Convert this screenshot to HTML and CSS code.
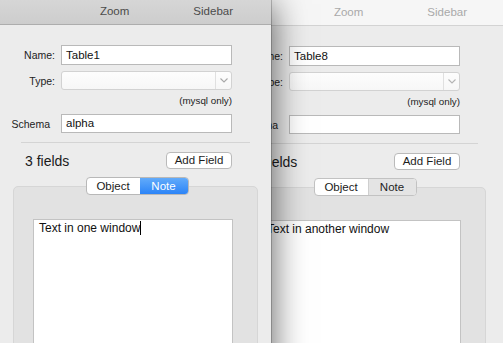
FILE: index.html
```html
<!DOCTYPE html>
<html>
<head>
<meta charset="utf-8">
<link rel="stylesheet" href="styles.css">
</head>
<body>
<div class="desktop">
  <div class="win back">
    <div class="toolbar"><span class="tb-item">Zoom</span><span class="tb-item">Sidebar</span></div>
    <div class="content">
      <div class="form">
        <label class="lbl">Name:</label>
        <div class="field">Table8</div>
        <label class="lbl row2">Type:</label>
        <div class="select row2"><span class="sel-val"></span><span class="sel-btn"><svg width="8" height="5" viewBox="0 0 8 5"><path d="M0.5 0.5 L4 4 L7.5 0.5" fill="none" stroke="#b4b4b4" stroke-width="1.1"/></svg></span></div>
        <div class="hint">(mysql only)</div>
        <label class="lbl schema">Schema</label>
        <div class="field schema"></div>
      </div>
      <div class="sep"></div>
      <div class="fields-row"><span class="count">3 fields</span><button class="btn">Add Field</button></div>
      <div class="tabs"><div class="seg"><span class="seg-item">Object</span><span class="seg-item on">Note</span></div></div>
      <div class="panel">
        <div class="textarea">Text in another window</div>
      </div>
    </div>
  </div>
  <div class="win front">
    <div class="toolbar"><span class="tb-item">Zoom</span><span class="tb-item">Sidebar</span></div>
    <div class="content">
      <div class="form">
        <label class="lbl">Name:</label>
        <div class="field">Table1</div>
        <label class="lbl row2">Type:</label>
        <div class="select row2"><span class="sel-val"></span><span class="sel-btn"><svg width="8" height="5" viewBox="0 0 8 5"><path d="M0.5 0.5 L4 4 L7.5 0.5" fill="none" stroke="#a8a8a8" stroke-width="1.1"/></svg></span></div>
        <div class="hint">(mysql only)</div>
        <label class="lbl schema">Schema</label>
        <div class="field schema">alpha</div>
      </div>
      <div class="sep"></div>
      <div class="fields-row"><span class="count">3 fields</span><button class="btn">Add Field</button></div>
      <div class="tabs"><div class="seg"><span class="seg-item">Object</span><span class="seg-item on">Note</span></div></div>
      <div class="panel">
        <div class="textarea">Text in one window<span class="caret"></span></div>
      </div>
    </div>
  </div>
</div>
</body>
</html>
```
FILE: styles.css
```css
html, body {
  margin: 0;
  padding: 0;
  background: #ececec;
  font-family: "Liberation Sans", Arial, sans-serif;
  color: #1e1e1e;
}
.desktop {
  position: relative;
  width: 503px;
  height: 343px;
  overflow: hidden;
}
.win {
  position: absolute;
  top: 0;
  height: 420px;
  background: #ececec;
}
.win.front {
  left: 0;
  width: 271px;
  z-index: 2;
  box-shadow: 1px 0 0 rgba(0,0,0,0.2), 2px 4px 32px rgba(0,0,0,0.6);
}
.win.back {
  left: 228px;
  width: 277px;
  z-index: 1;
}
.toolbar {
  box-sizing: border-box;
  height: 25px;
  border-bottom: 1px solid #adadad;
  background: linear-gradient(#d6d6d6, #cdcdcd);
  display: flex;
  justify-content: flex-end;
  align-items: flex-end;
  gap: 64px;
  padding-right: 38px;
  font-size: 11.5px;
  color: #4b4b4b;
}
.back .toolbar {
  background: #f6f6f6;
  border-bottom-color: #d3d3d3;
  color: #a9a9a9;
  height: 26px;
}
.tb-item {
  line-height: 13px;
  padding-bottom: 6px;
}
.content {
  width: 271px;
}
.form {
  display: grid;
  grid-template-columns: 55px 171px;
  column-gap: 6px;
  padding-top: 20px;
  font-size: 10.5px;
}
.lbl {
  text-align: right;
  align-self: center;
  color: #222;
}
.field {
  height: 20px;
  box-sizing: border-box;
  border: 1px solid #b9b9b9;
  background: #fff;
  padding-left: 4px;
  font-size: 11.5px;
  line-height: 18px;
  color: #111;
}
.row2 {
  margin-top: 6px;
}
.select {
  height: 19px;
  box-sizing: border-box;
  border: 1px solid #d2d2d2;
  border-radius: 3px;
  background: linear-gradient(#fdfdfd, #f7f7f7);
  display: flex;
}
.sel-val {
  flex: 1;
}
.sel-btn {
  width: 15px;
  border-left: 1px solid #e0e0e0;
  display: flex;
  align-items: center;
  justify-content: center;
}
.hint {
  grid-column: 2;
  text-align: right;
  font-size: 9.8px;
  line-height: 12px;
  margin-top: 5px;
  color: #222;
}
.schema {
  margin-top: 7px;
}
.lbl.schema {
  padding-right: 5px;
}
.field.schema {
  height: 19px;
  line-height: 17px;
}
.sep {
  margin: 9px 21px 0 21px;
  height: 1px;
  background: #d4d4d4;
}
.fields-row {
  display: flex;
  justify-content: space-between;
  align-items: center;
  margin-top: 9px;
  padding-left: 25px;
  width: 232px;
  box-sizing: border-box;
}
.count {
  font-size: 14px;
  color: #1a1a1a;
}
.btn {
  width: 66px;
  height: 17px;
  padding: 0;
  border: 1px solid #bababa;
  border-radius: 4px;
  background: #fff;
  font-family: inherit;
  font-size: 11.5px;
  line-height: 15px;
  color: #1e1e1e;
}
.tabs {
  display: flex;
  justify-content: center;
  padding-left: 3px;
  margin-top: 8px;
  margin-bottom: -9px;
  position: relative;
  z-index: 1;
}
.seg {
  display: flex;
  height: 18px;
  box-sizing: border-box;
  border: 1px solid #b8b8b8;
  border-radius: 4px;
  overflow: hidden;
  background: #fff;
  font-size: 11.5px;
  line-height: 16px;
}
.seg-item {
  width: 53px;
  text-align: center;
  color: #1a1a1a;
}
.seg-item.on {
  width: 48px;
  background: linear-gradient(#62abfa, #2c84f7);
  color: #fff;
}
.back .seg {
  border-color: #c2c2c2;
}
.back .seg-item.on {
  background: #e4e4e4;
  color: #1e1e1e;
  border-left: 1px solid #cfcfcf;
  width: 47px;
}
.panel {
  margin: 0 13px;
  background: #e2e2e2;
  border: 1px solid #d6d6d6;
  border-radius: 5px;
  padding: 32px 24px 0 19px;
  height: 200px;
}
.textarea {
  width: 200px;
  height: 200px;
  box-sizing: border-box;
  background: #fff;
  border: 1px solid #c3c3c3;
  padding: 1px 5px;
  font-size: 12px;
  line-height: 15px;
  color: #111;
}
.caret {
  display: inline-block;
  width: 1px;
  height: 14px;
  background: #000;
  vertical-align: -3px;
}
```
